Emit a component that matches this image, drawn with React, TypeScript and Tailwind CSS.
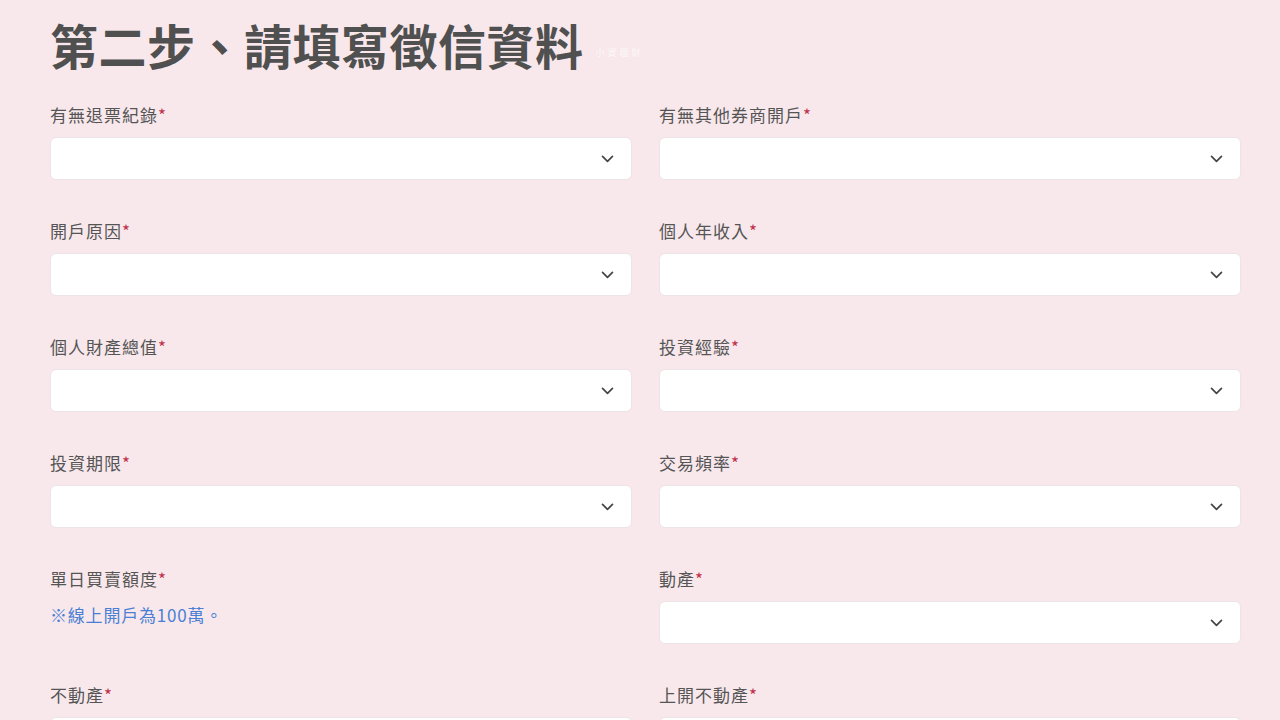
import React from "react";

type Field = {
  label: string;
  note?: string;
  noSelect?: boolean;
};

const fields: Field[] = [
  { label: "有無退票紀錄" },
  { label: "有無其他券商開戶" },
  { label: "開戶原因" },
  { label: "個人年收入" },
  { label: "個人財產總值" },
  { label: "投資經驗" },
  { label: "投資期限" },
  { label: "交易頻率" },
  { label: "單日買賣額度", note: "※線上開戶為100萬。", noSelect: true },
  { label: "動產" },
  { label: "不動產" },
  { label: "上開不動產" },
];

const Chevron = () => (
  <svg width="17" height="17" viewBox="0 0 24 24" fill="none" stroke="#444" strokeWidth="2.4" strokeLinecap="round" strokeLinejoin="round">
    <path d="M5 9l7 7 7-7" />
  </svg>
);

const SelectBox = () => (
  <div className="mt-[9px] h-[43px] w-full rounded-[6px] border border-[#ece4e6] bg-white flex items-center justify-end pr-[15px]">
    <Chevron />
  </div>
);

const FormField = ({ field }: { field: Field }) => {
  return (
    <div className="flex flex-col">
      <div className="h-[24px] leading-[22px] text-[17px] tracking-[1px] text-[#555555]">
        {field.label}
        <span className="text-[#c0304a]">*</span>
      </div>
      {field.note && (
        <div className="mt-[11px] h-[24px] leading-[24px] text-[17px] tracking-[0.8px] text-[#4a7fd4]">
          {field.note}
        </div>
      )}
      {!field.noSelect && <SelectBox />}
    </div>
  );
};

export default function App() {
  return (
    <div
      className="w-[1280px] h-[720px] overflow-hidden bg-[#f8e8ec] pl-[50px] pr-[39px]"
      style={{ fontFamily: '"Noto Sans CJK TC", "Noto Sans", sans-serif' }}
    >
      <div className="pt-[13px] flex items-end">
        <h1 className="text-[48px] leading-[62px] font-bold text-[#505050] tracking-[0.5px]">
          第二步、請填寫徵信資料
        </h1>
        <span className="ml-[12px] mb-[16px] text-[9px] text-white/70 tracking-[3px]">小資理財</span>
      </div>
      <div className="mt-[29px] grid grid-cols-2 gap-x-[27px] gap-y-[40px]">
        {fields.map((f) => (
          <FormField key={f.label} field={f} />
        ))}
      </div>
    </div>
  );
}
